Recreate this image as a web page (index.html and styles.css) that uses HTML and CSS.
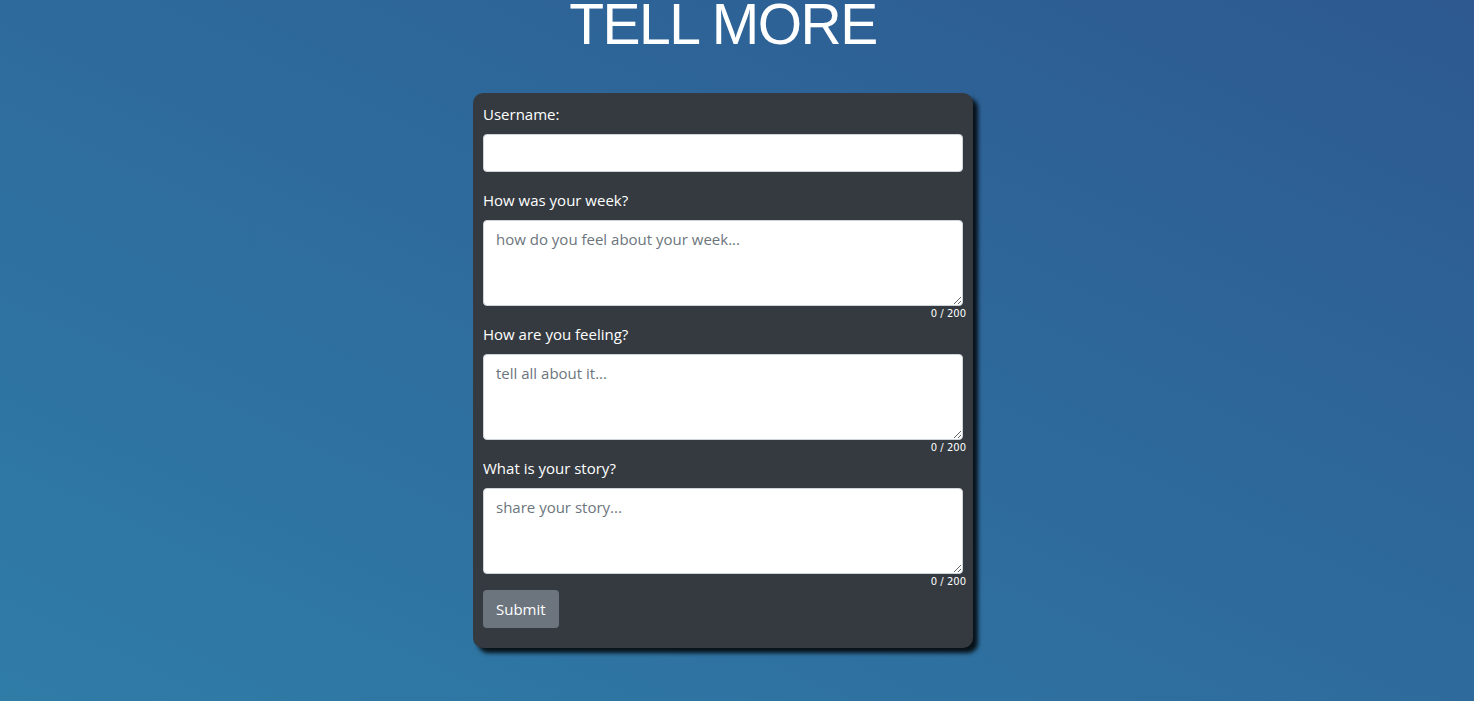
FILE: index.html
```html
<!DOCTYPE html>
<html>
<head>
<meta charset="utf-8">
<link rel="stylesheet" href="styles.css">
</head>
<body>
<div class="page">
  <h1 class="title">TELL MORE</h1>
  <form class="card">
    <div class="group">
      <label class="label">Username:</label>
      <input class="control" type="text">
    </div>
    <div class="group group-area">
      <label class="label">How was your week?</label>
      <textarea class="control area" placeholder="how do you feel about your week..."></textarea>
      <div class="counter">0 / 200</div>
    </div>
    <div class="group group-area">
      <label class="label">How are you feeling?</label>
      <textarea class="control area" placeholder="tell all about it..."></textarea>
      <div class="counter">0 / 200</div>
    </div>
    <div class="group group-area">
      <label class="label">What is your story?</label>
      <textarea class="control area" placeholder="share your story..."></textarea>
      <div class="counter">0 / 200</div>
    </div>
    <button class="btn" type="button">Submit</button>
  </form>
</div>
</body>
</html>
```
FILE: styles.css
```css
html, body {
  margin: 0;
  height: 100%;
}
body {
  background: linear-gradient(to top right, #2f7ca7, #2e6b9c 50%, #2d5990);
  font-family: "Segoe UI", "Open Sans", "Noto Sans", sans-serif;
  color: #fff;
  overflow: hidden;
}
.page {
  display: flex;
  flex-direction: column;
  align-items: center;
  padding-right: 28px;
}
.title {
  font-family: "Liberation Sans", Arial, sans-serif;
  font-weight: 400;
  font-size: 57px;
  line-height: 48px;
  letter-spacing: -1.5px;
  margin: 0 0 45px;
}
.card {
  width: 500px;
  box-sizing: border-box;
  background: #343a40;
  border-radius: 10px;
  padding: 9px 10px 20px;
  box-shadow: 5px 5px 4px rgba(0, 0, 0, 0.85);
}
.group {
  display: flex;
  flex-direction: column;
  margin-bottom: 16px;
}
.group-area {
  margin-bottom: 0;
}
.label {
  font-size: 15px;
  line-height: 24px;
  margin-bottom: 8px;
}
.control {
  display: block;
  width: 480px;
  height: 38px;
  box-sizing: border-box;
  border: 1px solid #ced4da;
  border-radius: 4px;
  background: #fff;
  padding: 6px 12px;
  font-family: inherit;
  font-size: 15px;
  line-height: 24px;
  color: #495057;
  margin: 0;
}
.area {
  height: 86px;
  resize: vertical;
}
.control::placeholder {
  color: #6c757d;
}
.counter {
  font-family: "DejaVu Sans", Verdana, sans-serif;
  font-size: 10px;
  line-height: 16px;
  height: 16px;
  text-align: right;
  margin-right: -3px;
}
.btn {
  display: block;
  background: #6c757d;
  color: #fff;
  border: 0;
  border-radius: 4px;
  height: 38px;
  padding: 0 13px;
  font-family: inherit;
  font-size: 15px;
}
```
